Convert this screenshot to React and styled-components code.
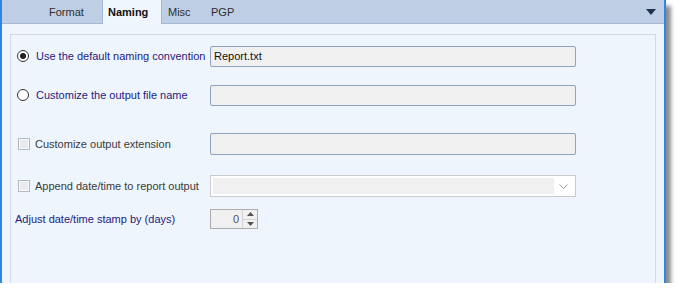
import React from "react";
import styled, { createGlobalStyle } from "styled-components";

const GlobalStyle = createGlobalStyle`
  html, body {
    margin: 0;
    padding: 0;
    background: #ffffff;
  }
  body {
    font-family: "Liberation Sans", Arial, sans-serif;
    font-size: 11px;
  }
`;

const Window = styled.div`
  width: 662px;
  height: 283px;
  border-left: 2px solid #2b86e6;
  border-right: 2px solid #2b86e6;
  box-sizing: content-box;
  display: flex;
  flex-direction: column;
  background: #eef5fd;
  box-shadow: 5px 6px 4px rgba(0, 0, 0, 0.45);
`;

const TabBar = styled.div`
  height: 23px;
  flex-shrink: 0;
  display: flex;
  align-items: stretch;
  padding-left: 41px;
  padding-right: 8px;
  background: #bdcee5;
  border-bottom: 1px solid #a4b8d3;
`;

const Tab = styled.div`
  width: ${(p) => p.$w}px;
  padding-left: 5px;
  box-sizing: border-box;
  display: flex;
  align-items: center;
  color: ${(p) => (p.$active ? "#111111" : "#2f2f2f")};
  font-weight: ${(p) => (p.$active ? "bold" : "normal")};
  background: ${(p) => (p.$active ? "#eff6fe" : "transparent")};
  border-left: 1px solid ${(p) => (p.$active ? "#a4b8d3" : "transparent")};
  border-right: 1px solid ${(p) => (p.$active ? "#a4b8d3" : "transparent")};
  margin-bottom: ${(p) => (p.$active ? "-1px" : "0")};
  padding-top: ${(p) => (p.$active ? "0" : "1px")};
`;

const MenuArrow = styled.div`
  margin-left: auto;
  display: flex;
  align-items: center;
`;

const Body = styled.div`
  flex: 1;
  display: flex;
  padding: 10px 8px 0 8px;
`;

const GroupBox = styled.div`
  flex: 1;
  border: 1px solid #d3d9e1;
  border-bottom: none;
  padding-top: 10px;
`;

const Row = styled.div`
  height: 22px;
  margin-top: ${(p) => p.$top}px;
  display: grid;
  grid-template-columns: 199px 366px;
  align-items: center;
`;

const Choice = styled.label`
  display: flex;
  align-items: center;
  gap: ${(p) => p.$gap || 7}px;
  padding-left: ${(p) => p.$pad}px;
  color: ${(p) => (p.$muted ? "#3b3b3b" : "#1f1b80")};
  white-space: nowrap;
`;

const Radio = styled.span`
  width: 12px;
  height: 12px;
  box-sizing: border-box;
  border-radius: 50%;
  border: 1px solid #333333;
  background: #ffffff;
  display: flex;
  align-items: center;
  justify-content: center;
  &::after {
    content: "";
    width: 6px;
    height: 6px;
    border-radius: 50%;
    background: ${(p) => (p.$checked ? "#222222" : "transparent")};
  }
`;

const Check = styled.span`
  width: 12px;
  height: 12px;
  box-sizing: border-box;
  border: 1px solid #b4bac2;
  background: #e9ebee;
  box-shadow: inset 0 0 0 1px #f6f7f8;
  margin-left: 1px;
`;

const TextBox = styled.div`
  height: ${(p) => p.$h || 21}px;
  box-sizing: border-box;
  border: 1px solid #8fa3bf;
  border-radius: 2px;
  background: #f0f0f0;
  display: flex;
  align-items: center;
  padding-left: 3px;
  color: #111111;
`;

const Combo = styled.div`
  height: 22px;
  box-sizing: border-box;
  border: 1px solid #cacaca;
  background: #ffffff;
  padding: 2px;
  display: flex;
`;

const ComboField = styled.div`
  flex: 1;
  background: #f0f0f0;
`;

const ComboButton = styled.div`
  width: 19px;
  display: flex;
  align-items: center;
  justify-content: center;
`;

const Spinner = styled.div`
  width: 48px;
  height: 20px;
  box-sizing: border-box;
  border: 1px solid #adadad;
  background: #f0f0f0;
  display: flex;
`;

const SpinValue = styled.div`
  flex: 1;
  display: flex;
  align-items: center;
  justify-content: flex-end;
  padding-right: 3px;
  color: #555555;
`;

const SpinButtons = styled.div`
  width: 14px;
  display: flex;
  flex-direction: column;
  border-left: 1px solid #d4d4d4;
`;

const SpinButton = styled.div`
  flex: 1;
  display: flex;
  align-items: center;
  justify-content: center;
  border-top: ${(p) => (p.$down ? "1px solid #d4d4d4" : "none")};
`;

const Tri = ({ up }) => (
  <svg width="7" height="4" viewBox="0 0 7 4">
    <polygon points={up ? "0,4 7,4 3.5,0" : "0,0 7,0 3.5,4"} fill="#555555" />
  </svg>
);

const tabs = [
  { label: "Format", w: 59 },
  { label: "Naming", w: 60, active: true },
  { label: "Misc", w: 43 },
  { label: "PGP", w: 40 },
];

const App = () => {
  return (
    <>
      <GlobalStyle />
      <Window>
        <TabBar>
          {tabs.map((t) => (
            <Tab key={t.label} $w={t.w} $active={t.active}>
              {t.label}
            </Tab>
          ))}
          <MenuArrow>
            <svg width="10" height="6" viewBox="0 0 10 6">
              <polygon points="0,0 10,0 5,6" fill="#1e3350" />
            </svg>
          </MenuArrow>
        </TabBar>
        <Body>
          <GroupBox>
            <Row $top={0}>
              <Choice $pad={6}>
                <Radio $checked />
                Use the default naming convention
              </Choice>
              <TextBox>Report.txt</TextBox>
            </Row>
            <Row $top={17}>
              <Choice $pad={6}>
                <Radio />
                Customize the output file name
              </Choice>
              <TextBox />
            </Row>
            <Row $top={27}>
              <Choice $pad={6} $gap={5} $muted>
                <Check />
                Customize output extension
              </Choice>
              <TextBox $h={22} />
            </Row>
            <Row $top={20}>
              <Choice $pad={6} $gap={5} $muted>
                <Check />
                Append date/time to report output
              </Choice>
              <Combo>
                <ComboField />
                <ComboButton>
                  <svg width="9" height="5" viewBox="0 0 9 5">
                    <polyline points="0.5,0.5 4.5,4.5 8.5,0.5" fill="none" stroke="#9a9a9a" strokeWidth="1" />
                  </svg>
                </ComboButton>
              </Combo>
            </Row>
            <Row $top={11}>
              <Choice $pad={4}>Adjust date/time stamp by (days)</Choice>
              <Spinner>
                <SpinValue>0</SpinValue>
                <SpinButtons>
                  <SpinButton>
                    <Tri up />
                  </SpinButton>
                  <SpinButton $down>
                    <Tri />
                  </SpinButton>
                </SpinButtons>
              </Spinner>
            </Row>
          </GroupBox>
        </Body>
      </Window>
    </>
  );
};

export default App;
